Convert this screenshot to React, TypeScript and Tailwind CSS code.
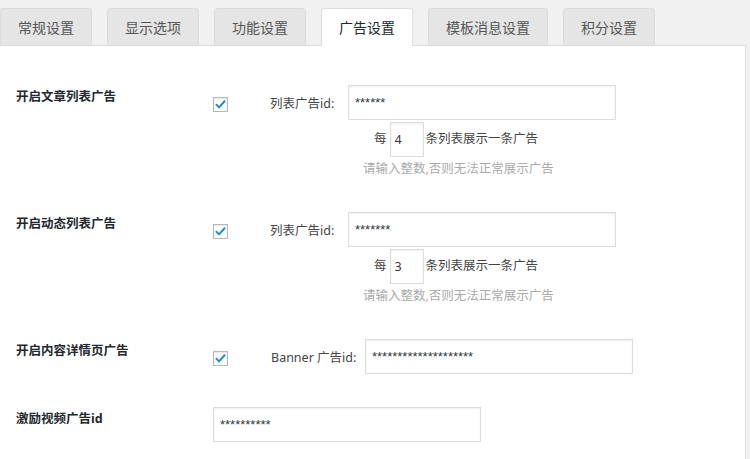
import React from 'react';

const tabs = ['常规设置', '显示选项', '功能设置', '广告设置', '模板消息设置', '积分设置'];
const font = { fontFamily: '"Noto Sans", "Noto Sans CJK SC", sans-serif' };
const inputFont = { fontFamily: '"Liberation Sans", "Noto Sans CJK SC", sans-serif' };

const Checkbox = () => (
  <div className="mt-1 flex h-[15px] w-[15px] shrink-0 items-center justify-center border border-[#b4b9be] bg-white shadow-[inset_0_1px_2px_rgba(0,0,0,0.1)]">
    <svg viewBox="0 0 16 16" className="h-[13px] w-[13px]">
      <path d="M3 8.2l3.2 3.3L13 4" fill="none" stroke="#1e8cbe" strokeWidth={2.4} strokeLinecap="round" strokeLinejoin="round" />
    </svg>
  </div>
);

const TextInput = ({ value }: { value: string }) => (
  <input
    readOnly
    defaultValue={value}
    style={inputFont}
    className="h-[35px] w-[268px] border border-[#ddd] bg-white pl-[6px] text-[13px] text-[#32373c] shadow-[inset_0_1px_2px_rgba(0,0,0,0.07)] outline-none"
  />
);

const ListAdRow = ({ title, id, every }: { title: string; id: string; every: string }) => (
  <div className="flex items-start">
    <div className="w-[213px] shrink-0 pl-4 pt-[2px] text-[12.5px] font-bold leading-[20px] text-[#23282d]">{title}</div>
    <div className="flex flex-col">
      <div className="flex items-center">
        <Checkbox />
        <span className="ml-[42px] mt-1 w-[78px] text-[12.5px] text-[#444]">列表广告id:</span>
        <TextInput value={id} />
      </div>
      <div className="mt-[2px] flex items-center pl-[161px] text-[12.5px] text-[#444]">
        <span>每</span>
        <input
          readOnly
          defaultValue={every}
          style={font}
          className="ml-[3px] h-[35px] w-[34px] border border-[#ddd] bg-white pl-[4px] text-[12.5px] text-[#32373c] shadow-[inset_0_1px_2px_rgba(0,0,0,0.07)] outline-none"
        />
        <span className="ml-[2px]">条列表展示一条广告</span>
      </div>
      <div className="mt-[3px] pl-[150px] text-[12.5px] leading-[18px] text-[#aaa]">请输入整数,否则无法正常展示广告</div>
    </div>
  </div>
);

export default function App() {
  return (
    <div style={font} className="flex h-[459px] w-[750px] flex-col overflow-hidden bg-[#f1f1f1]">
      <div className="flex gap-[15px] pt-2">
        {tabs.map((t) => (
          <div
            key={t}
            className={`relative z-10 flex h-[38px] items-center rounded-t-[3px] border px-[17px] text-[14px] ${
              t === '广告设置'
                ? 'border-[#ddd] border-b-white bg-white text-[#23282d]'
                : 'border-[#dcdcdc] bg-[#e5e5e5] text-[#555]'
            }`}
          >
            {t}
          </div>
        ))}
      </div>
      <div className="-mt-px flex w-[746px] flex-1 flex-col gap-[34px] border-r border-t border-[#ddd] bg-white pt-[39px]">
        <ListAdRow title="开启文章列表广告" id="******" every="4" />
        <ListAdRow title="开启动态列表广告" id="*******" every="3" />
        <div className="flex items-start">
          <div className="w-[213px] shrink-0 pl-4 pt-[2px] text-[12.5px] font-bold leading-[20px] text-[#23282d]">开启内容详情页广告</div>
          <div className="flex items-center">
            <Checkbox />
            <span className="ml-[43px] mt-1 w-[94px] whitespace-nowrap text-[12.5px] text-[#444]">Banner 广告id:</span>
            <TextInput value="********************" />
          </div>
        </div>
        <div className="-mt-px flex items-start">
          <div className="w-[213px] shrink-0 pl-4 pt-[2px] text-[12.5px] font-bold leading-[20px] text-[#23282d]">激励视频广告id</div>
          <TextInput value="**********" />
        </div>
      </div>
    </div>
  );
}
